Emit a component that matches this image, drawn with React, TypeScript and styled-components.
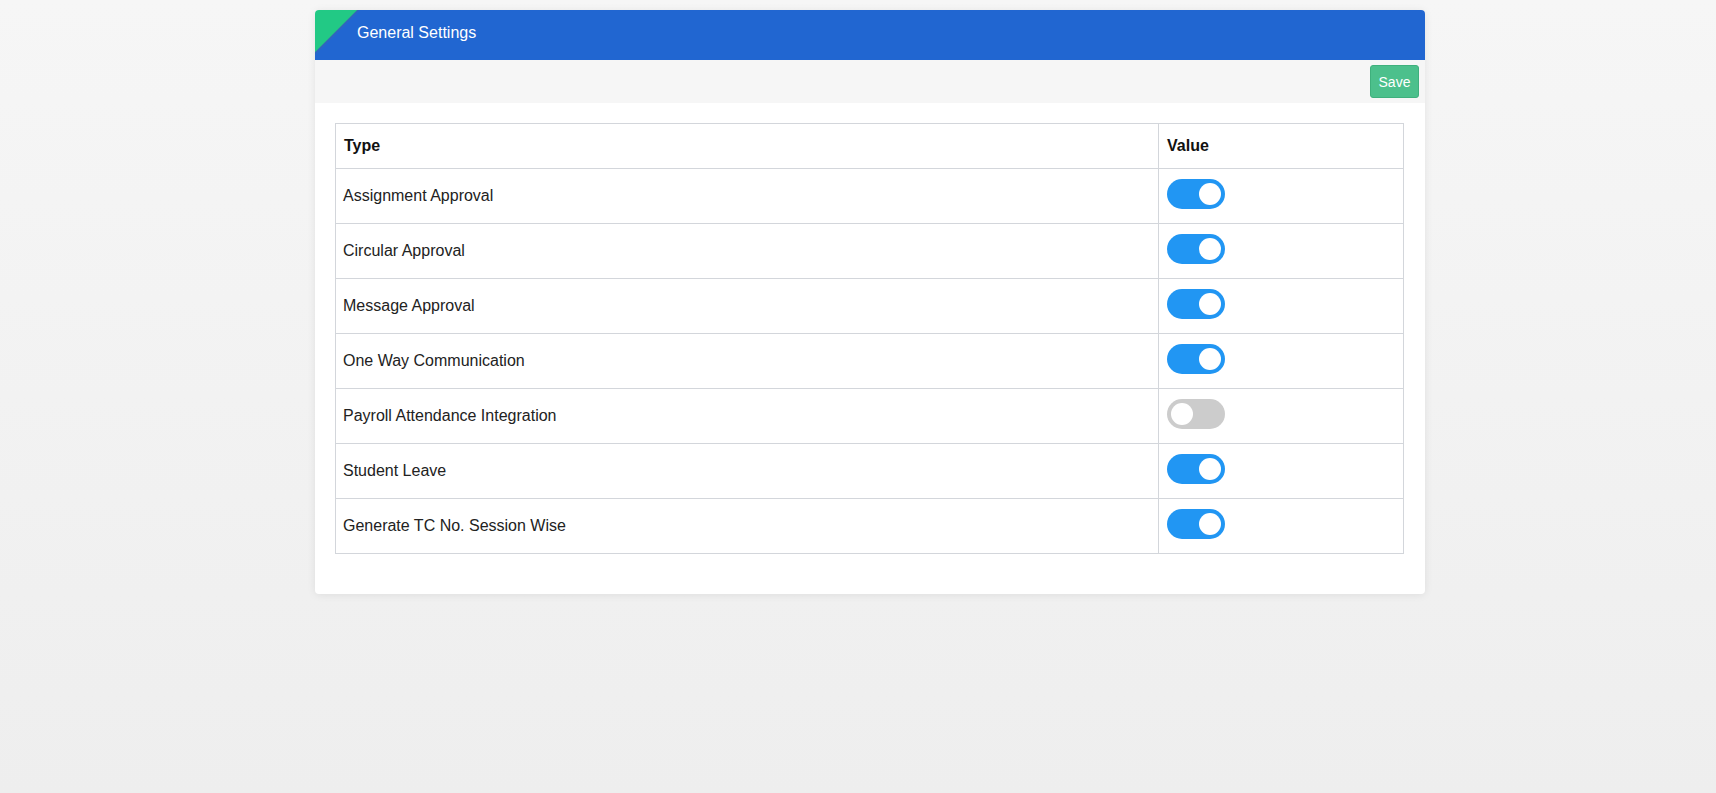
import React, { useState } from "react";
import styled, { createGlobalStyle } from "styled-components";

const GlobalStyle = createGlobalStyle`
  html, body {
    margin: 0;
    padding: 0;
  }
  body {
    min-height: 793px;
    background: linear-gradient(180deg, #f6f6f6 0%, #eeeeee 100%);
    font-family: "Liberation Sans", Arial, sans-serif;
    color: #222;
  }
`;

const Page = styled.div`
  display: flex;
  justify-content: center;
  padding: 10px 0 0 24px;
  min-height: 793px;
  box-sizing: border-box;
`;

const Card = styled.section`
  width: 1110px;
  align-self: flex-start;
  background: #fff;
  border-radius: 4px;
  box-shadow: 0 1px 8px rgba(0, 0, 0, 0.08);
`;

const Header = styled.header`
  height: 50px;
  box-sizing: border-box;
  display: flex;
  align-items: center;
  padding: 0 0 4px 42px;
  border-radius: 4px 4px 0 0;
  background: linear-gradient(
    135deg,
    #22c985 0,
    #22c985 29.5px,
    #3567b4 30px,
    #2166d1 32.5px,
    #2166d1 100%
  );
  color: #fff;
  font-size: 16px;
`;

const Toolbar = styled.div`
  height: 43px;
  background: #f6f6f6;
  display: flex;
  align-items: center;
  justify-content: flex-end;
  padding-right: 6px;
`;

const SaveButton = styled.button`
  height: 33px;
  width: 49px;
  padding: 0;
  border: 1px solid #3fb07d;
  border-radius: 3px;
  background: #4cc08c;
  color: #fff;
  font-family: "Liberation Sans", Arial, sans-serif;
  font-size: 14px;
  cursor: pointer;
`;

const Body = styled.div`
  padding: 20px 21px 40px 20px;
`;

const Table = styled.table`
  width: 100%;
  border-collapse: collapse;
  table-layout: fixed;
`;

const HeadCell = styled.th<{ $w?: string }>`
  ${(p) => (p.$w ? `width: ${p.$w};` : "")}
  height: 45px;
  box-sizing: border-box;
  border: 1px solid #d3d6db;
  padding: 0 8px;
  text-align: left;
  font-size: 16px;
  font-weight: bold;
  color: #111;
  vertical-align: middle;
`;

const Cell = styled.td`
  height: 55px;
  box-sizing: border-box;
  border: 1px solid #d3d6db;
  padding: 0 8px 0 7px;
  font-size: 16px;
  color: #222;
  vertical-align: middle;
`;

const SwitchCell = styled(Cell)`
  padding-left: 8px;
`;

const Switch = styled.button<{ $on: boolean }>`
  position: relative;
  display: block;
  width: 58px;
  height: 30px;
  margin-bottom: 5px;
  padding: 0;
  border: none;
  border-radius: 15px;
  background: ${(p) => (p.$on ? "#2196f3" : "#cccccc")};
  cursor: pointer;

  &::after {
    content: "";
    position: absolute;
    top: 4px;
    left: ${(p) => (p.$on ? "32px" : "4px")};
    width: 22px;
    height: 22px;
    border-radius: 50%;
    background: #fff;
  }
`;

const initial = [
  { label: "Assignment Approval", on: true },
  { label: "Circular Approval", on: true },
  { label: "Message Approval", on: true },
  { label: "One Way Communication", on: true },
  { label: "Payroll Attendance Integration", on: false },
  { label: "Student Leave", on: true },
  { label: "Generate TC No. Session Wise", on: true },
];

export default function App() {
  const [rows, setRows] = useState(initial);
  const toggle = (i: number) =>
    setRows((r) => r.map((x, j) => (j === i ? { ...x, on: !x.on } : x)));

  return (
    <>
      <GlobalStyle />
      <Page>
        <Card>
          <Header>General Settings</Header>
          <Toolbar>
            <SaveButton>Save</SaveButton>
          </Toolbar>
          <Body>
            <Table>
              <thead>
                <tr>
                  <HeadCell>Type</HeadCell>
                  <HeadCell $w="245px">Value</HeadCell>
                </tr>
              </thead>
              <tbody>
                {rows.map((r, i) => (
                  <tr key={r.label}>
                    <Cell>{r.label}</Cell>
                    <SwitchCell>
                      <Switch
                        $on={r.on}
                        aria-label={r.label}
                        onClick={() => toggle(i)}
                      />
                    </SwitchCell>
                  </tr>
                ))}
              </tbody>
            </Table>
          </Body>
        </Card>
      </Page>
    </>
  );
}
